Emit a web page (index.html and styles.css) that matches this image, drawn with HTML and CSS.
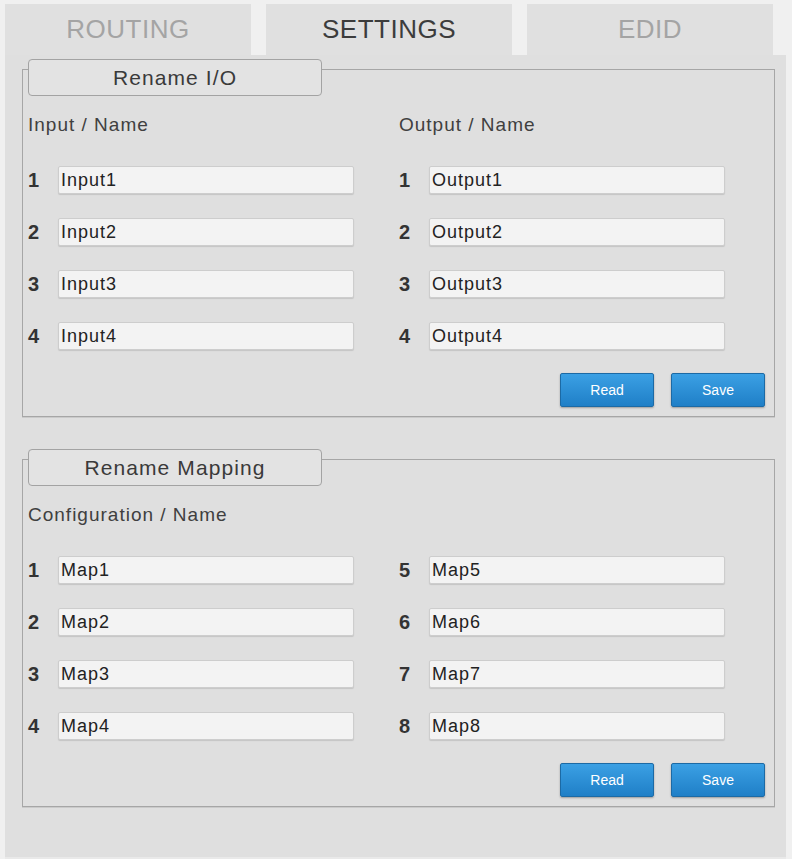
FILE: index.html
```html
<!DOCTYPE html>
<html lang="en">
<head>
    <meta charset="UTF-8">
    <meta name="viewport" content="width=device-width, initial-scale=1.0">
    <title>Settings</title>
    <link rel="stylesheet" href="styles.css">
</head>
<body>

<div class="tabs">
    <div class="tab">ROUTING</div>
    <div class="tab active">SETTINGS</div>
    <div class="tab">EDID</div>
</div>

<div class="panel">
    <!-- Rename I/O -->
    <div class="group">
        <div class="group-title">Rename I/O</div>
        <div class="cols head">
            <div>Input / Name</div>
            <div>Output / Name</div>
        </div>
        <div class="cols rows">
            <label class="field"><span class="num">1</span><input type="text" value="Input1"></label>
            <label class="field"><span class="num">1</span><input type="text" value="Output1"></label>
            <label class="field"><span class="num">2</span><input type="text" value="Input2"></label>
            <label class="field"><span class="num">2</span><input type="text" value="Output2"></label>
            <label class="field"><span class="num">3</span><input type="text" value="Input3"></label>
            <label class="field"><span class="num">3</span><input type="text" value="Output3"></label>
            <label class="field"><span class="num">4</span><input type="text" value="Input4"></label>
            <label class="field"><span class="num">4</span><input type="text" value="Output4"></label>
        </div>
        <div class="actions">
            <button class="btn">Read</button>
            <button class="btn">Save</button>
        </div>
    </div>

    <!-- Rename Mapping -->
    <div class="group">
        <div class="group-title">Rename Mapping</div>
        <div class="cols head">
            <div>Configuration / Name</div>
        </div>
        <div class="cols rows">
            <label class="field"><span class="num">1</span><input type="text" value="Map1"></label>
            <label class="field"><span class="num">5</span><input type="text" value="Map5"></label>
            <label class="field"><span class="num">2</span><input type="text" value="Map2"></label>
            <label class="field"><span class="num">6</span><input type="text" value="Map6"></label>
            <label class="field"><span class="num">3</span><input type="text" value="Map3"></label>
            <label class="field"><span class="num">7</span><input type="text" value="Map7"></label>
            <label class="field"><span class="num">4</span><input type="text" value="Map4"></label>
            <label class="field"><span class="num">8</span><input type="text" value="Map8"></label>
        </div>
        <div class="actions">
            <button class="btn">Read</button>
            <button class="btn">Save</button>
        </div>
    </div>
</div>

</body>
</html>
```

FILE: styles.css
```css
/* page */
body {
    margin: 0;
    background-color: #f0f0f0;
    font-family: "Liberation Sans", Arial, sans-serif;
    color: #3a3a3a;
}
/* tabs */
.tabs {
    display: flex;
    gap: 15px;
    padding: 4px 0 0 5px;
}
.tab {
    width: 246px;
    height: 51px;
    display: flex;
    align-items: center;
    justify-content: center;
    background-color: #e0e0e0;
    color: #a4a4a4;
    font-size: 26px;
    letter-spacing: 0.5px;
}
.tab.active {
    color: #3c3c3c;
}
/* main panel */
.panel {
    width: 781px;
    box-sizing: border-box;
    margin-left: 5px;
    padding: 14px 11px 50px 17px;
    background-color: #dfdfdf;
    border-bottom: 2px solid #e9e9e9;
}
/* group box */
.group {
    border: 1px solid #a6a6a6;
    box-shadow: 0 1px 0 #cacaca;
    padding: 0 9px 9px 5px;
}
.group + .group {
    margin-top: 42px;
}
.group-title {
    width: 294px;
    height: 37px;
    box-sizing: border-box;
    margin-top: -11px;
    display: flex;
    align-items: center;
    justify-content: center;
    background-color: #e3e3e3;
    border: 1px solid #a3a3a3;
    border-radius: 4px;
    font-size: 21px;
    letter-spacing: 1.1px;
    color: #3a3a3a;
}
/* columns */
.cols {
    display: grid;
    grid-template-columns: 371px 1fr;
}
.head {
    margin-top: 18px;
    font-size: 19px;
    line-height: 22px;
    letter-spacing: 1px;
    color: #404040;
}
.rows {
    margin-top: 30px;
    row-gap: 24px;
}
.field {
    display: flex;
    align-items: center;
}
.num {
    width: 30px;
    font-size: 20px;
    font-weight: bold;
    color: #333;
}
.field input {
    width: 296px;
    height: 28px;
    box-sizing: border-box;
    margin: 0;
    padding: 0 2px;
    background-color: #f3f3f3;
    border: 1px solid #cdcdcd;
    border-radius: 2px;
    box-shadow: 0 1px 1px rgba(0, 0, 0, 0.12);
    font-family: "Liberation Sans", Arial, sans-serif;
    font-size: 18px;
    letter-spacing: 1px;
    color: #222;
}
/* buttons */
.actions {
    display: flex;
    justify-content: flex-end;
    gap: 17px;
    margin-top: 23px;
}
.btn {
    width: 94px;
    height: 34px;
    background: linear-gradient(#3ba0e4, #1f7fc7);
    border: 1px solid #1c6aa5;
    border-radius: 2px;
    box-shadow: 0 1px 2px rgba(0, 0, 0, 0.3);
    color: white;
    font-family: "Liberation Sans", Arial, sans-serif;
    font-size: 14px;
    cursor: pointer;
}
```
